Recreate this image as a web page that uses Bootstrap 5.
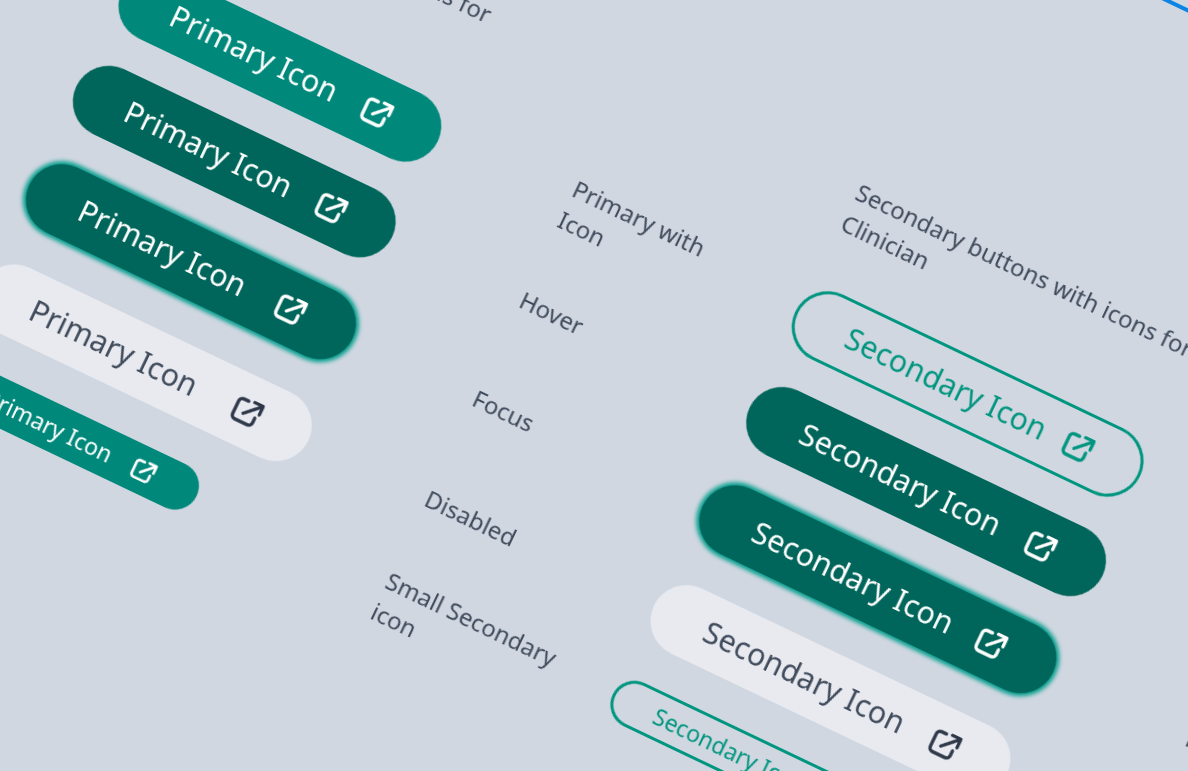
<!doctype html>
<html lang="en"><head><meta charset="utf-8"><title>Buttons</title>
<link rel="stylesheet" href="https://cdn.jsdelivr.net/npm/bootstrap@5.3.0/dist/css/bootstrap.min.css">
<style>
html,body{height:100%;overflow:hidden}
body{background:#d0d7e1;font-family:"Noto Sans",sans-serif;color:#3f4a5a}
.sheet{width:1800px;transform-origin:0 0;transform:rotate(25.5deg) translate(0,-504px);padding-left:106px;filter:blur(.5px)}
.edgebar{height:4px;background:#0d84e4;margin-left:940px;margin-bottom:284px;width:600px}
.specrow{display:grid;grid-template-columns:350px 141px 253px 388px 151px 200px;align-items:center;margin-bottom:34px;min-height:72px}
.specrow.tall{margin-bottom:0;align-items:start}
.specrow.headrow{margin-bottom:47px}
.specrow.row-hover{margin-bottom:37px}
.specrow.row-focus{margin-bottom:39px}
.specrow.row-off{margin-bottom:26px}
.speclabel{font-size:24px;line-height:34px;grid-column:3;margin-left:2px;padding-right:53px}
.tall .speclabel{margin-top:12px}
.tall .pbtn{margin-top:12px}
.spechead{font-size:24px;line-height:34px;margin-left:2px}
.colb{grid-column:4}
.colc{grid-column:6;font-size:24px;line-height:34px}
.cola{grid-column:1}
.spechead.colb{grid-column:4 / 6;max-width:440px}
.spechead.cola{grid-column:1 / 3;max-width:440px}
.pbtn{height:72px;border-radius:36px;font-size:30.4px;line-height:1;display:flex;align-items:center;justify-content:center;gap:28px;padding:0 0 0 3px;color:#fff;background:#00897b;border:0}
.pbtn svg{width:32px;height:32px;flex:none}
.pbtn.is-hover{background:#00655a;color:#fff}
.pbtn.is-focus{background:#00655a;color:#fff;box-shadow:0 0 4px 3px #009d8c}
.pbtn.is-off{background:#e8eaf0;color:#3f4a5a;opacity:1}
.pbtn.is-off svg{color:#2d3748}
.pbtn.is-outline{background:transparent;color:#00957f;border:3px solid #00957f}
.pbtn.is-small{height:48px;font-size:23px;gap:23px;width:285px;padding-left:7px}
.pbtn.is-small svg{width:26px;height:26px}
.cola.is-focus{width:358px;gap:34px}
.cola.is-off{width:362px;gap:40px}
.colb{padding-left:4px}
.pbtn.colb.is-outline{width:382px;margin-left:2px;gap:20px}
.pbtn.colb.is-hover{width:391px;margin-left:2px;gap:29px}
.pbtn.colb.is-focus{width:388px;margin-left:2px;gap:27px}
.pbtn.colb.is-off{width:391px;margin-left:1px;gap:30px}
.pbtn.colb.is-small{width:305px;margin-left:2px;gap:20px;padding-left:0}
</style></head><body>
<svg width="0" height="0" class="position-absolute"><defs><symbol id="ext" viewBox="0 0 24 24" fill="none" stroke="currentColor" stroke-width="2.5" stroke-linecap="round" stroke-linejoin="round"><path d="M10 4.500H6a3 3 0 0 0-3 3V18a3 3 0 0 0 3 3h10.500a3 3 0 0 0 3-3v-4"/><path d="M10 14.500 21 4"/><path d="M14.500 3.500H21.500V10.500"/></symbol></defs></svg>
<div class="sheet">
<div class="edgebar"></div>
<div class="specrow headrow"><div class="spechead cola">Primary buttons with icons for Clinician</div><div class="spechead colb">Secondary buttons with icons for Clinician</div></div>
<div class="specrow"><a class="btn pbtn cola" href="#">Primary Icon<svg><use href="#ext"/></svg></a><div class="speclabel">Primary with Icon</div><a class="btn pbtn is-outline colb" href="#">Secondary Icon<svg><use href="#ext"/></svg></a></div>
<div class="specrow row-hover"><a class="btn pbtn is-hover cola" href="#">Primary Icon<svg><use href="#ext"/></svg></a><div class="speclabel">Hover</div><a class="btn pbtn is-hover colb" href="#">Secondary Icon<svg><use href="#ext"/></svg></a></div>
<div class="specrow row-focus"><a class="btn pbtn is-focus cola" href="#">Primary Icon<svg><use href="#ext"/></svg></a><div class="speclabel">Focus</div><a class="btn pbtn is-focus colb" href="#">Secondary Icon<svg><use href="#ext"/></svg></a><div class="colc">Focus</div></div>
<div class="specrow row-off"><a class="btn pbtn is-off cola" href="#">Primary Icon<svg><use href="#ext"/></svg></a><div class="speclabel">Disabled</div><a class="btn pbtn is-off colb" href="#">Secondary Icon<svg><use href="#ext"/></svg></a></div>
<div class="specrow tall"><a class="btn pbtn is-small cola" href="#">Primary Icon<svg><use href="#ext"/></svg></a><div class="speclabel">Small Secondary icon</div><a class="btn pbtn is-small is-outline colb" href="#">Secondary Icon<svg><use href="#ext"/></svg></a></div>
</div>
</body></html>
